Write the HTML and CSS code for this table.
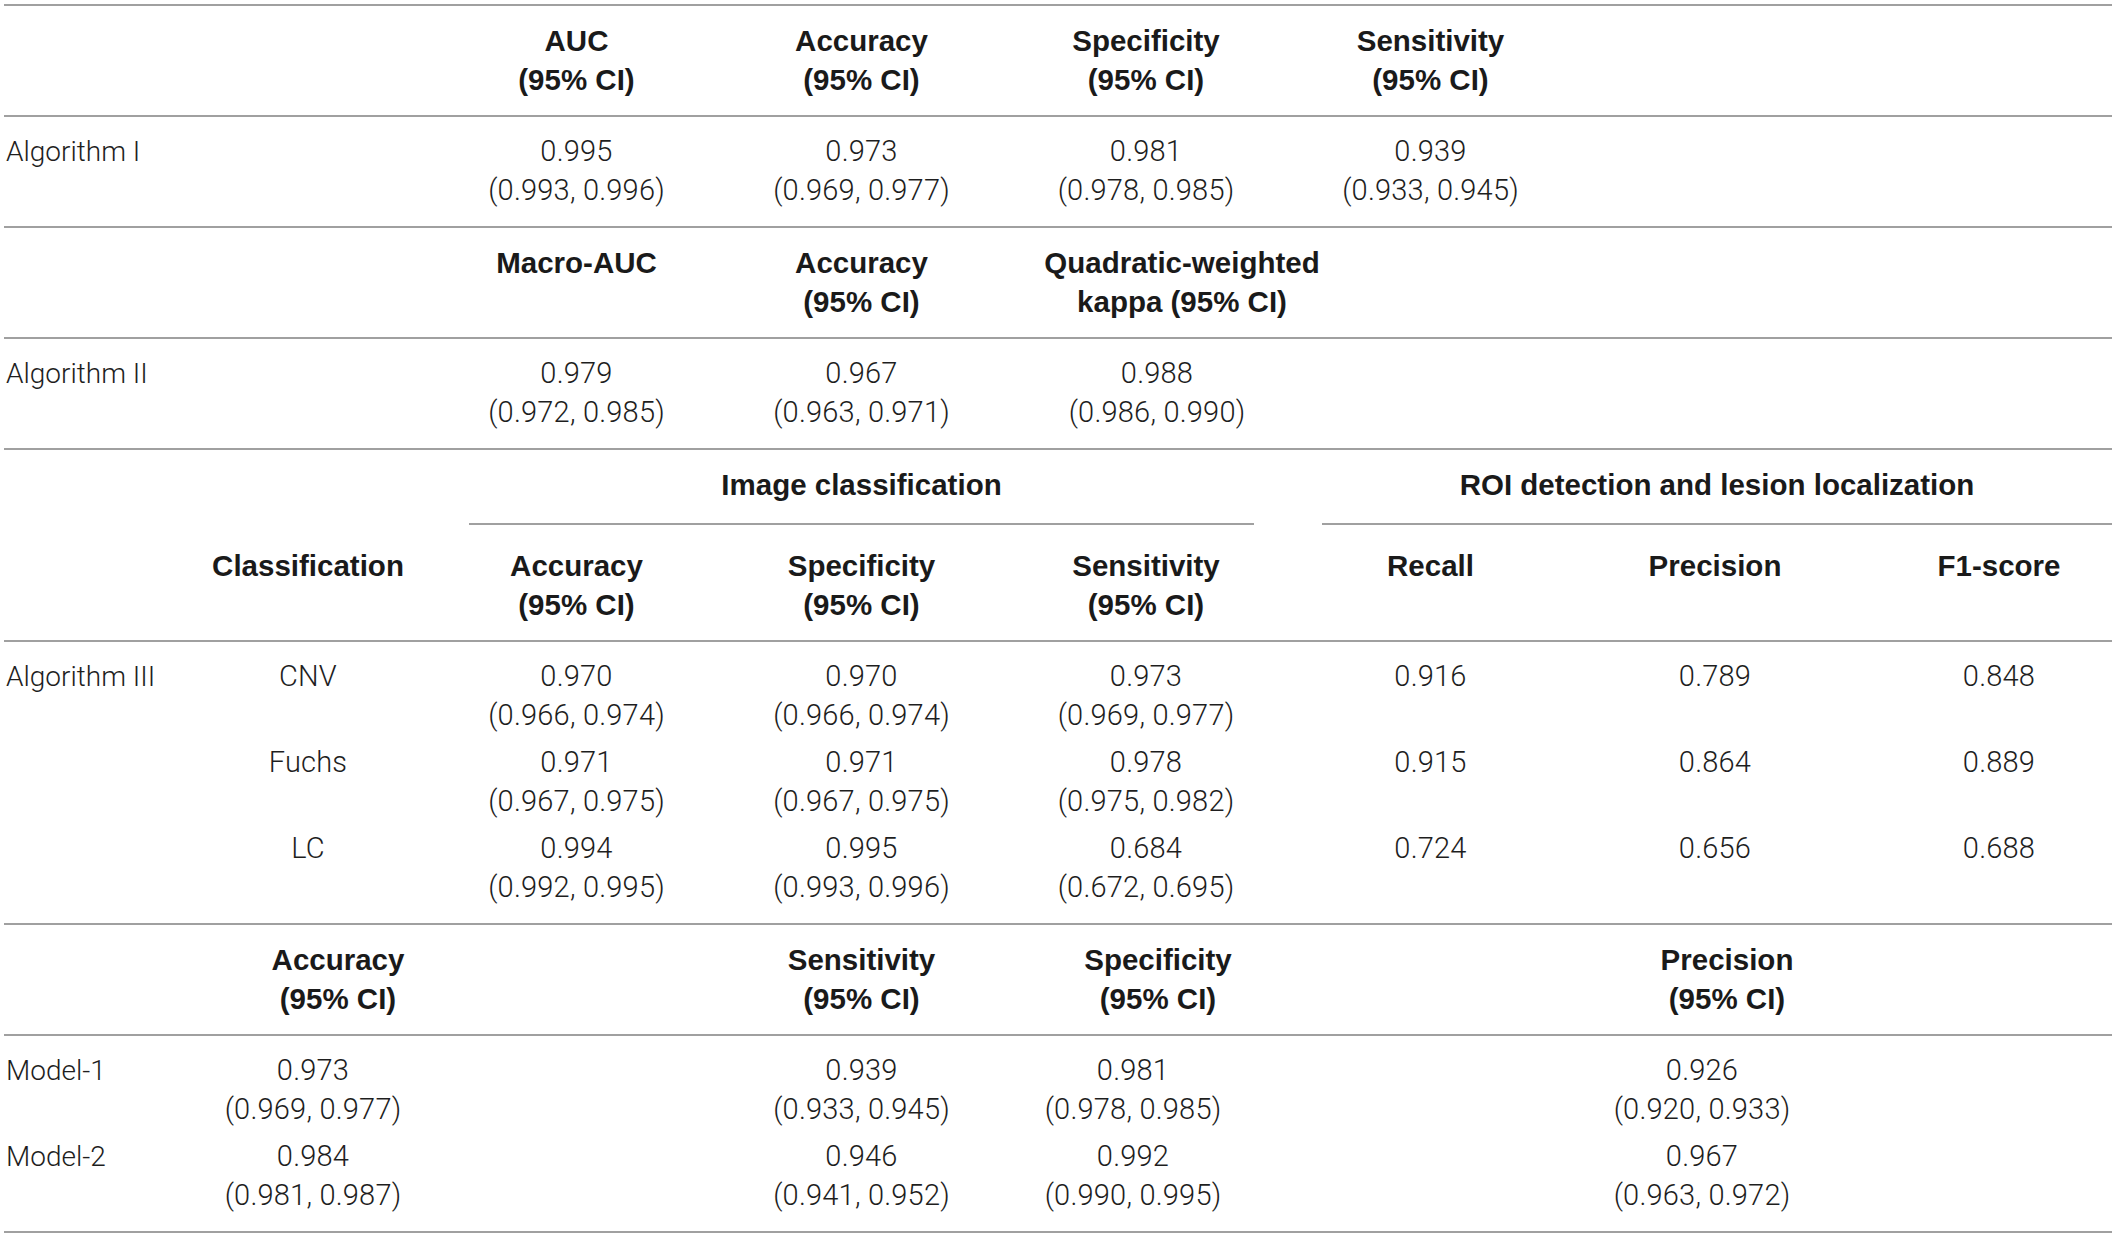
FILE: index.html
```html
<!DOCTYPE html>
<html lang="en">
<head>
    <meta charset="UTF-8">
    <title>Algorithm performance</title>
    <link rel="stylesheet" href="styles.css">
</head>
<body>
    <div class="table">
        <!-- Algorithm I -->
        <div class="grid head">
            <div class="c3">AUC<br>(95% CI)</div>
            <div class="c4">Accuracy<br>(95% CI)</div>
            <div class="c5">Specificity<br>(95% CI)</div>
            <div class="c6">Sensitivity<br>(95% CI)</div>
        </div>
        <div class="grid body">
            <div class="label">Algorithm I</div>
            <div class="c3">0.995<br>(0.993, 0.996)</div>
            <div class="c4">0.973<br>(0.969, 0.977)</div>
            <div class="c5">0.981<br>(0.978, 0.985)</div>
            <div class="c6">0.939<br>(0.933, 0.945)</div>
        </div>

        <!-- Algorithm II -->
        <div class="grid head">
            <div class="c3">Macro-AUC</div>
            <div class="c4">Accuracy<br>(95% CI)</div>
            <div class="c5 kappa-head">Quadratic-weighted<br>kappa (95% CI)</div>
        </div>
        <div class="grid body">
            <div class="label">Algorithm II</div>
            <div class="c3">0.979<br>(0.972, 0.985)</div>
            <div class="c4">0.967<br>(0.963, 0.971)</div>
            <div class="c5 kappa-val">0.988<br>(0.986, 0.990)</div>
        </div>

        <!-- Algorithm III -->
        <div class="grid head split">
            <div class="group">Image classification</div>
            <div class="group roi">ROI detection and lesion localization</div>
            <div class="c2">Classification</div>
            <div class="c3">Accuracy<br>(95% CI)</div>
            <div class="c4">Specificity<br>(95% CI)</div>
            <div class="c5">Sensitivity<br>(95% CI)</div>
            <div class="c6">Recall</div>
            <div class="c7">Precision</div>
            <div class="c8 f1">F1-score</div>
        </div>
        <div class="grid body">
            <div class="label">Algorithm III</div>
            <div class="c2">CNV</div>
            <div class="c3">0.970<br>(0.966, 0.974)</div>
            <div class="c4">0.970<br>(0.966, 0.974)</div>
            <div class="c5">0.973<br>(0.969, 0.977)</div>
            <div class="c6">0.916</div>
            <div class="c7">0.789</div>
            <div class="c8 f1">0.848</div>

            <div class="c2">Fuchs</div>
            <div class="c3">0.971<br>(0.967, 0.975)</div>
            <div class="c4">0.971<br>(0.967, 0.975)</div>
            <div class="c5">0.978<br>(0.975, 0.982)</div>
            <div class="c6">0.915</div>
            <div class="c7">0.864</div>
            <div class="c8 f1">0.889</div>

            <div class="c2">LC</div>
            <div class="c3">0.994<br>(0.992, 0.995)</div>
            <div class="c4">0.995<br>(0.993, 0.996)</div>
            <div class="c5">0.684<br>(0.672, 0.695)</div>
            <div class="c6">0.724</div>
            <div class="c7">0.656</div>
            <div class="c8 f1">0.688</div>
        </div>

        <!-- Models -->
        <div class="grid head">
            <div class="c2 acc-head">Accuracy<br>(95% CI)</div>
            <div class="c4">Sensitivity<br>(95% CI)</div>
            <div class="c5 shift-head">Specificity<br>(95% CI)</div>
            <div class="c7 shift-head">Precision<br>(95% CI)</div>
        </div>
        <div class="grid body">
            <div class="label">Model-1</div>
            <div class="c2 acc-val">0.973<br>(0.969, 0.977)</div>
            <div class="c4">0.939<br>(0.933, 0.945)</div>
            <div class="c5 shift-val">0.981<br>(0.978, 0.985)</div>
            <div class="c7 shift-val">0.926<br>(0.920, 0.933)</div>

            <div class="label">Model-2</div>
            <div class="c2 acc-val">0.984<br>(0.981, 0.987)</div>
            <div class="c4">0.946<br>(0.941, 0.952)</div>
            <div class="c5 shift-val">0.992<br>(0.990, 0.995)</div>
            <div class="c7 shift-val">0.967<br>(0.963, 0.972)</div>
        </div>
    </div>
</body>
</html>
```

FILE: styles.css
```css
body { margin: 0; background: #fff; color: #1e1e1e; }
.table { margin: 4px 6px 0 4px; border-top: 2px solid #a0a0a0; font-family: Roboto, "Liberation Sans", sans-serif; font-weight: 300; font-size: 29px; letter-spacing: 0.2px; line-height: 39px; }

.grid { display: grid; grid-template-columns: 178px 252px 285px 285px 284px 285px 284px 255px; border-bottom: 2px solid #a0a0a0; }
.grid > div { justify-self: center; text-align: center; white-space: nowrap; }
.head { padding: 15px 0 16px; font-family: "Liberation Sans", Arial, sans-serif; font-weight: 700; font-size: 29.5px; letter-spacing: 0; color: #1a1a1a; }
.head.split { row-gap: 21px; }
.body { padding: 15px 0 16px; row-gap: 8px; }

.grid > .label { grid-column: 1; justify-self: start; text-align: left; padding-left: 2px; font-size: 28px; letter-spacing: 0; }
.c2 { grid-column: 2; }
.c3 { grid-column: 3; }
.c4 { grid-column: 4; }
.c5 { grid-column: 5; }
.c6 { grid-column: 6; }
.c7 { grid-column: 7; }
.c8 { grid-column: 8; }

/* spanning group titles with their own underline */
.grid > .group { grid-column: 3 / 6; justify-self: stretch; padding-bottom: 19px; border-bottom: 2px solid #a0a0a0; margin: 0 34px 0 35px; }
.grid > .group.roi { grid-column: 6 / 9; margin: 0 0 0 34px; }

/* small offsets where the source columns don't line up */
.kappa-head { margin-left: 72px; }
.kappa-val { margin-left: 22px; }
.f1 { margin-left: 29px; }
.acc-head { margin-left: 60px; }
.acc-val { margin-left: 10px; }
.shift-head { margin-left: 24px; }
.shift-val { margin-left: -26px; }
```
